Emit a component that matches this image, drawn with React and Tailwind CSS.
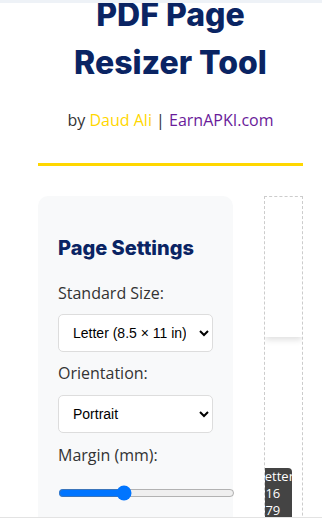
import React, { useState } from "react";

export default function App() {
  const [size, setSize] = useState("letter");
  const [orientation, setOrientation] = useState("portrait");
  const [margin, setMargin] = useState(18);

  return (
    <div className="h-[525px] overflow-hidden bg-white" style={{ fontFamily: "'Open Sans', sans-serif" }}>
      <div className="h-[3px] bg-[#eef2f7]" />
      <div className="h-[515px] overflow-hidden border-b border-[#e3e3e3]">
        <div className="w-[341px]">
          <h1 className="mt-[-12px] text-center text-[32px] leading-[48px] font-extrabold text-[#0a2463] font-['Inter',sans-serif]">
            PDF Page
            <br />
            Resizer Tool
          </h1>
          <p className="mt-[21px] text-center text-[16px] leading-[24px] text-[#333]">
            by <span className="text-[#ffd700]">Daud Ali</span> |{" "}
            <span className="text-[#6a1b9a]">EarnAPKI.com</span>
          </p>
          <div className="mx-[38px] mt-[31px] h-[3px] bg-[#ffd700]" />

          <div className="flex gap-[31px] pl-[38px] mt-[30px]">
            {/* settings panel */}
            <div className="w-[195px] shrink-0 rounded-[10px] bg-[#f8f9fa] px-[20px] pt-[37px] pb-8">
              <h2 className="text-[20px] leading-[30px] font-extrabold text-[#0a2463] font-['Inter',sans-serif]">
                Page Settings
              </h2>
              <label className="mt-[18px] block text-[16px] leading-[24px] text-[#333]">Standard Size:</label>
              <select
                value={size}
                onChange={(e) => setSize(e.target.value)}
                className="mt-[9px] h-[38px] w-[155px] rounded-[5px] border border-[#ddd] bg-white px-[10px] text-[14px] text-black font-['Liberation_Sans',sans-serif]"
              >
                <option value="letter">Letter (8.5 × 11 in)</option>
                <option value="a4">A4 (210 × 297 mm)</option>
              </select>
              <label className="mt-[9px] block text-[16px] leading-[24px] text-[#333]">Orientation:</label>
              <select
                value={orientation}
                onChange={(e) => setOrientation(e.target.value)}
                className="mt-[10px] h-[38px] w-[155px] rounded-[5px] border border-[#ddd] bg-white px-[10px] text-[14px] text-black font-['Liberation_Sans',sans-serif]"
              >
                <option value="portrait">Portrait</option>
                <option value="landscape">Landscape</option>
              </select>
              <label className="mt-[10px] block text-[16px] leading-[24px] text-[#333]">Margin (mm):</label>
              <input
                type="range"
                min="0"
                max="50"
                value={margin}
                onChange={(e) => setMargin(Number(e.target.value))}
                className="mt-[18px] block w-[177px]"
              />
            </div>

            {/* preview */}
            <div className="relative h-[400px] w-[39px] shrink-0 overflow-hidden border border-dashed border-[#ccc]">
              <div className="h-[140px] bg-white shadow-[0_3px_6px_rgba(0,0,0,0.12)]" />
              <div className="absolute left-[-8px] top-[271px] w-[35px] rounded-tr-[4px] bg-[#444] px-[1px] text-[13px] leading-[17px] text-white">
                Letter
                <br />
                216
                <br />
                279
              </div>
            </div>
          </div>
        </div>
      </div>
    </div>
  );
}
